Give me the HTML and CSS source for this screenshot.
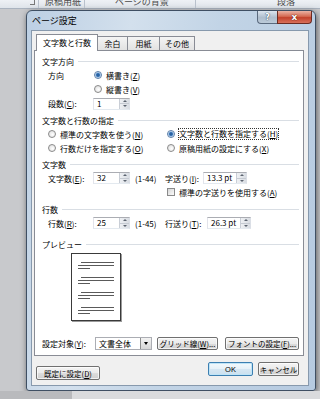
FILE: index.html
```html
<!DOCTYPE html>
<html>

<head>
    <meta charset="UTF-8">
    <title>ページ設定</title>
    <link rel="stylesheet" href="styles.css">
</head>

<body>
    <div class="ribbon">
        <div class="rb rb-a"><span class="launcher"></span></div>
        <div class="rb rb-b"><span>原稿用紙</span></div>
        <div class="rb rb-c"><span>ページの背景</span></div>
        <div class="rb rb-d"><span>段落</span></div>
    </div>

    <div class="stage">
        <div class="dialog">
            <div class="titlebar">
                <span class="title">ページ設定</span>
                <div class="captionButtons">
                    <span class="capHelp">?</span>
                    <span class="capClose">x</span>
                </div>
            </div>

            <div class="client">
                <div class="tabs">
                    <span class="tab active">文字数と行数</span>
                    <span class="tab w30">余白</span>
                    <span class="tab w32">用紙</span>
                    <span class="tab w35">その他</span>
                </div>

                <div class="panel">
                    <div class="group first"><span>文字方向</span><i></i></div>
                    <div class="row">
                        <span class="lbl w46">方向</span>
                        <span class="radio on"></span><span>横書き(<u>Z</u>)</span>
                    </div>
                    <div class="row">
                        <span class="lbl w46"></span>
                        <span class="radio"></span><span>縦書き(<u>V</u>)</span>
                    </div>
                    <div class="row tall">
                        <span class="lbl w45">段数(<u>C</u>):</span>
                        <span class="edit w37"><span class="val">1</span><span class="spin"><b class="up"></b><b class="down"></b></span></span>
                    </div>

                    <div class="group g2"><span>文字数と行数の指定</span><i></i></div>
                    <div class="row">
                        <span class="col">
                            <span class="radio"></span><span>標準の文字数を使う(<u>N</u>)</span>
                        </span>
                        <span class="radio on"></span><span class="focus">文字数と行数を指定する(<u>H</u>)</span>
                    </div>
                    <div class="row">
                        <span class="col">
                            <span class="radio"></span><span>行数だけを指定する(<u>O</u>)</span>
                        </span>
                        <span class="radio"></span><span>原稿用紙の設定にする(<u>X</u>)</span>
                    </div>

                    <div class="group g3"><span>文字数</span><i></i></div>
                    <div class="row">
                        <span class="lbl w45">文字数(<u>E</u>):</span>
                        <span class="edit w37"><span class="val">32</span><span class="spin"><b class="up"></b><b class="down"></b></span></span>
                        <span class="range">(1-44)</span>
                        <span class="lbl w38">字送り(<u>I</u>):</span>
                        <span class="edit w44"><span class="val">13.3 pt</span><span class="spin"><b class="up"></b><b class="down"></b></span></span>
                    </div>
                    <div class="row">
                        <span class="indent"></span>
                        <span class="check"></span><span>標準の字送りを使用する(<u>A</u>)</span>
                    </div>

                    <div class="group g4"><span>行数</span><i></i></div>
                    <div class="row">
                        <span class="lbl w45">行数(<u>R</u>):</span>
                        <span class="edit w37"><span class="val">25</span><span class="spin"><b class="up"></b><b class="down"></b></span></span>
                        <span class="range">(1-45)</span>
                        <span class="lbl w42">行送り(<u>T</u>):</span>
                        <span class="edit w44"><span class="val">26.3 pt</span><span class="spin"><b class="up"></b><b class="down"></b></span></span>
                    </div>

                    <div class="group g5"><span>プレビュー</span><i></i></div>
                    <div class="sheet">
                        <div class="para"><div class="ln first"></div><div class="ln"></div><div class="ln last"></div></div>
                        <div class="para"><div class="ln first"></div><div class="ln"></div><div class="ln last"></div></div>
                        <div class="para"><div class="ln first"></div><div class="ln"></div><div class="ln last"></div></div>
                        <div class="para"><div class="ln first"></div><div class="ln"></div><div class="ln last"></div></div>
                    </div>

                    <div class="applyRow">
                        <span class="lbl w53">設定対象(<u>Y</u>):</span>
                        <span class="combo"><span class="val">文書全体</span><span class="arrow"><b></b></span></span>
                        <span class="btn gridBtn">グリッド線(<u>W</u>)...</span>
                        <span class="btn fontBtn">フォントの設定(<u>F</u>)...</span>
                    </div>
                </div>

                <div class="footer">
                    <span class="btn defaultsBtn">既定に設定(<u>D</u>)</span>
                    <span class="btn okBtn">OK</span>
                    <span class="btn cancelBtn">キャンセル</span>
                </div>
            </div>
        </div>
    </div>

    <div class="under">
        <div class="underLeft"></div>
        <div class="underRight"></div>
    </div>
</body>

</html>
```

FILE: styles.css
```css
body,
html {
    margin: 0;
    width: 320px;
    height: 399px;
    overflow: hidden;
}

body {
    background-color: #c8c9cc;
    font-family: 'Noto Sans CJK JP', 'Noto Sans', sans-serif;
    font-size: 8px;
    color: #000;
}

u {
    text-decoration: underline;
    text-underline-offset: 1px;
}

/* ribbon strip behind the dialog */
.ribbon {
    display: flex;
    height: 8px;
    background: linear-gradient(#eef1f5, #dfe4ea);
    border-bottom: 1px solid #aab3bf;
    overflow: hidden;
    color: #4a4a4a;
    font-size: 9px;
}

.rb {
    height: 8px;
    box-sizing: border-box;
}

.rb span {
    display: block;
    line-height: 10px;
    margin-top: -3px;
}

.rb-a {
    width: 38px;
    display: flex;
    justify-content: flex-end;
    padding-right: 3px;
}

.rb-a .launcher {
    width: 4px;
    height: 4px;
    margin-top: 0;
    border-right: 1px solid #777;
    border-bottom: 1px solid #777;
}

.rb-b {
    width: 46px;
    border-left: 1px solid #b9c1cc;
    padding-left: 6px;
}

.rb-c {
    width: 111px;
    border-left: 1px solid #b9c1cc;
    padding-left: 30px;
}

.rb-d {
    flex: 1;
    border-left: 1px solid #b9c1cc;
    padding-left: 81px;
}

.stage {
    padding: 1px 0 0 26px;
    height: 381px;
}

/* dialog frame */
.dialog {
    width: 290px;
    height: 381px;
    box-sizing: border-box;
    display: flex;
    flex-direction: column;
    border: 1px solid #3f4f63;
    border-radius: 6px 6px 3px 3px;
    background: linear-gradient(100deg, #bccfe3 0%, #d3e0ed 30%, #c2d4e6 55%, #b6cae0 100%);
    box-shadow: 1px 2px 6px rgba(0, 0, 0, .55);
}

.titlebar {
    display: flex;
    align-items: flex-start;
    height: 19px;
}

.title {
    padding-left: 5px;
    line-height: 19px;
    font-size: 9px;
}

.captionButtons {
    display: flex;
    margin-left: auto;
    margin-right: 3px;
}

.capHelp,
.capClose {
    display: flex;
    align-items: center;
    justify-content: center;
    height: 13px;
    box-sizing: border-box;
    border: 1px solid #5a6a7e;
    border-top: none;
    font-family: 'DejaVu Sans', sans-serif;
    font-weight: bold;
    color: #fff;
}

.capHelp {
    width: 20px;
    border-radius: 0 0 0 4px;
    border-right: none;
    background: linear-gradient(#dbe4ee, #aebdcd 55%, #bccbd9);
    font-size: 8px;
    text-shadow: 0 0 1px #3a4a5c, 0 0 1px #3a4a5c;
}

.capClose {
    width: 35px;
    border-radius: 0 0 4px 0;
    border-color: #6b2b22;
    background: linear-gradient(#eab3a4, #d46a52 45%, #c2422c 55%, #d8705a);
    font-size: 9px;
    text-shadow: 0 0 1px #5a1a10, 0 0 1px #5a1a10;
}

.client {
    flex: 1;
    margin: 0 6px 4px 4px;
    border: 1px solid #8799ad;
    background-color: #f0f0f0;
    padding: 3px 4px 0 2px;
    display: flex;
    flex-direction: column;
}

/* tabs */
.tabs {
    display: flex;
    align-items: flex-end;
    height: 16px;
    padding-left: 2px;
}

.tab {
    display: flex;
    align-items: center;
    justify-content: center;
    height: 14px;
    box-sizing: border-box;
    margin-left: -1px;
    border: 1px solid #898c95;
    border-bottom: none;
    background: linear-gradient(#f4f4f4, #e2e2e2);
    line-height: 12px;
}

.tab.active {
    width: 62px;
    height: 17px;
    margin-left: 0;
    margin-bottom: -1px;
    background: #fff;
    position: relative;
    z-index: 1;
}

.w30 { width: 31px; }
.w32 { width: 33px; }
.w35 { width: 36px; }

.panel {
    width: 270px;
    height: 306px;
    box-sizing: border-box;
    border: 1px solid #898c95;
    background-color: #fff;
    padding-top: 4px;
}

.group {
    display: flex;
    align-items: center;
    height: 13px;
    padding-left: 7px;
}

.group i {
    flex: 1;
    height: 1px;
    margin: 0 4px 0 4px;
    background-color: #d9dee4;
}

.g2 { margin-top: 3px; }
.g3 { margin-top: 2px; height: 14px; }
.g4 { margin-top: 3px; height: 14px; }
.g5 { margin-top: 7px; height: 14px; }

.row {
    display: flex;
    align-items: center;
    height: 14px;
    padding-left: 13px;
}

.row.tall {
    height: 15px;
}

.lbl {
    flex-shrink: 0;
}

.w45 { width: 45px; }
.w46 { width: 46px; }
.w38 { width: 38px; }
.w42 { width: 42px; }
.w53 { width: 53px; }

.col {
    display: flex;
    align-items: center;
    width: 119px;
}

.indent {
    width: 119px;
}

.radio {
    width: 8px;
    height: 8px;
    box-sizing: border-box;
    margin-right: 4px;
    border-radius: 50%;
    border: 1px solid #8a8a8a;
    background: radial-gradient(circle at 60% 60%, #ffffff, #d9d9d9);
    flex-shrink: 0;
}

.radio.on {
    border-color: #5a7da6;
    background: radial-gradient(circle, #1c4f8c 0, #3d78b8 1.6px, #b9d3ef 2.6px, #f4f7fb 3.2px);
}

.check {
    width: 8px;
    height: 8px;
    box-sizing: border-box;
    margin-right: 4px;
    border: 1px solid #8a8a8a;
    background: linear-gradient(135deg, #d6d6d6, #fbfbfb);
}

.focus {
    outline: 1px dotted #333;
    outline-offset: 0;
    line-height: 10px;
}

/* spin edit boxes */
.edit {
    display: flex;
    align-items: stretch;
    height: 12px;
    box-sizing: border-box;
    border: 1px solid #abadb3;
    border-color: #abadb3 #dbdfe6 #e3e9ef #e2e3ea;
    background-color: #fff;
    flex-shrink: 0;
}

.w37 { width: 37px; }
.w44 { width: 44px; }

.edit .val {
    flex: 1;
    padding-left: 3px;
    line-height: 10px;
    white-space: nowrap;
    overflow: hidden;
}

.spin {
    width: 9px;
    display: flex;
    flex-direction: column;
    border-left: 1px solid #c9ced6;
    background: linear-gradient(90deg, #eef0f3, #d9dde3);
}

.spin b {
    flex: 1;
    display: flex;
    align-items: center;
    justify-content: center;
}

.spin .up {
    border-bottom: 1px solid #c5cad2;
}

.spin .up::after,
.spin .down::after {
    content: '';
    border-left: 2px solid transparent;
    border-right: 2px solid transparent;
}

.spin .up::after {
    border-bottom: 2px solid #5c6470;
}

.spin .down::after {
    border-top: 2px solid #5c6470;
}

.range {
    width: 30px;
    margin-left: 5px;
    flex-shrink: 0;
}

/* preview */
.sheet {
    width: 50px;
    height: 68px;
    box-sizing: border-box;
    margin: 2px 0 0 36px;
    border: 1px solid #3a3a3a;
    padding: 8px 6px 0 6px;
    box-shadow: 1px 1px 0 #9a9a9a;
}

.para {
    margin-bottom: 8px;
}

.ln {
    height: 1px;
    margin-bottom: 2px;
    background-color: #5a5a5a;
}

.ln.first {
    margin-left: 3px;
}

.ln.last {
    width: 12px;
    margin-bottom: 0;
}

.applyRow {
    display: flex;
    align-items: center;
    height: 13px;
    margin-top: 16px;
    padding-left: 7px;
}

.combo {
    display: flex;
    width: 57px;
    height: 13px;
    box-sizing: border-box;
    border: 1px solid #abadb3;
    background-color: #fff;
}

.combo .val {
    flex: 1;
    padding-left: 3px;
    line-height: 11px;
}

.combo .arrow {
    width: 10px;
    display: flex;
    align-items: center;
    justify-content: center;
    border-left: 1px solid #8e8f8f;
    background: linear-gradient(#f3f3f3, #d6d6d6);
}

.combo .arrow b {
    border-left: 2.5px solid transparent;
    border-right: 2.5px solid transparent;
    border-top: 3px solid #000;
}

/* push buttons */
.btn {
    display: flex;
    align-items: center;
    justify-content: center;
    height: 13px;
    box-sizing: border-box;
    border: 1px solid #707070;
    border-radius: 2px;
    background: linear-gradient(#f4f4f4 0, #ebebeb 50%, #dddddd 50%, #cfcfcf 100%);
    box-shadow: inset 0 0 0 1px rgba(255, 255, 255, .7);
    white-space: nowrap;
    flex-shrink: 0;
    font-size: 7.5px;
}

.gridBtn {
    width: 61px;
    margin-left: 5px;
}

.fontBtn {
    width: 74px;
    margin-left: 7px;
}

.footer {
    display: flex;
    align-items: flex-start;
    margin-top: 6px;
    padding: 0 5px 0 2px;
}

.footer .btn {
    height: 14px;
}

.defaultsBtn {
    width: 64px;
    margin-top: 4px;
}

.okBtn {
    width: 45px;
    height: 15px;
    margin-left: auto;
    border-color: #3c7fb1;
    background: linear-gradient(#f3f9fd 0, #e6f1f8 50%, #d6e7f3 50%, #cbe0ef 100%);
    box-shadow: inset 0 0 0 1px #bfe4f7;
    font-family: 'Liberation Sans', sans-serif;
}

.cancelBtn {
    width: 41px;
    margin-left: 5px;
}

.under {
    display: flex;
    height: 8px;
}

.underLeft {
    width: 72px;
    background-color: #b9babd;
}

.underRight {
    flex: 1;
    background-color: #dadbdd;
}
```
